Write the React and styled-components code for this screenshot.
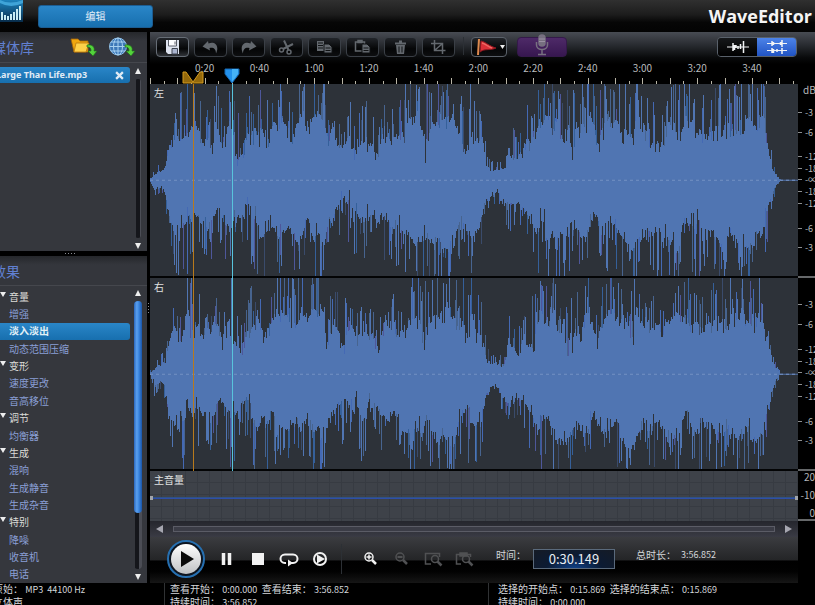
import React from "react";
import styled, { createGlobalStyle, css } from "styled-components";

const GlobalStyle = createGlobalStyle`
  * { box-sizing: border-box; }
  body {
    margin: 0;
    background: #000;
    color: #d4d6da;
    font: 10px/12px "Noto Sans CJK SC", "Noto Sans", sans-serif;
    overflow: hidden;
  }
  button, input { font: inherit; color: inherit; }
  button { margin: 0; padding: 0; border: 0; background: none; cursor: pointer; }
  svg { display: block; }
`;

/* ---------- data ---------- */

const DURATION = 236.852;
const SELECTION = 15.869;
const CURSOR = 30.149;
const percent = (s) => (s / DURATION) * 100;

const EFFECTS = [
  { name: "音量", items: ["增强", "淡入淡出", "动态范围压缩"] },
  { name: "变形", items: ["速度更改", "音高移位"] },
  { name: "调节", items: ["均衡器"] },
  { name: "生成", items: ["混响", "生成静音", "生成杂音"] },
  { name: "特别", items: ["降噪", "收音机", "电话"] },
];

const DB_MARKS = [
  ["-3", 22], ["-6", 20], ["-12", 25], ["-18", 12], ["-∞", 11],
  ["-18", 12], ["-12", 12], ["-6", 25], ["-3", 19],
];

/* Envelope points: position, quiet level, loud level */
const UPPER = [
  [0, 1, 3], [8, 4, 14], [15, 9, 24], [19, 32, 40], [23, 38, 75], [30, 23, 80], [38, 38, 97], [46, 38, 84], [54, 32, 70],
  [60, 28, 60], [66, 38, 97], [72, 20, 60], [80, 34, 97], [86, 20, 66], [93, 18, 50], [100, 34, 85], [108, 34, 88],
  [115, 30, 70], [122, 35, 80], [128, 48, 97], [138, 44, 90], [141, 24, 90], [148, 46, 97], [165, 48, 97], [174, 42, 97],
  [178, 20, 70], [184, 34, 90], [192, 22, 60], [198, 34, 78], [206, 22, 55], [214, 34, 80], [222, 24, 60], [228, 14, 45],
  [234, 42, 80], [248, 34, 70], [256, 40, 90], [266, 50, 97], [274, 22, 97], [282, 50, 97], [306, 50, 97], [313, 22, 97],
  [318, 26, 95], [324, 36, 92], [332, 26, 62], [335, 14, 36], [340, 9, 18], [348, 7, 17], [355, 10, 18], [358, 24, 55],
  [367, 11, 40], [376, 28, 68], [384, 20, 72], [391, 48, 97], [404, 42, 90], [415, 26, 85], [428, 28, 97], [440, 42, 97],
  [447, 26, 80], [458, 46, 94], [470, 38, 94], [480, 30, 90], [488, 48, 97], [500, 32, 70], [512, 32, 76], [522, 38, 90],
  [534, 46, 92], [548, 40, 84], [558, 38, 76], [572, 32, 97], [585, 40, 90], [597, 42, 97], [607, 46, 97], [613, 44, 97],
  [616, 28, 72], [620, 18, 32], [623, 7, 18], [627, 3, 8], [630, 0, 1], [648, 0, 0],
];
const LOWER = [
  [0, 1, 3], [4, 5, 22], [9, 6, 14], [15, 10, 26], [19, 34, 52], [27, 42, 97], [34, 36, 97], [44, 28, 66], [52, 32, 74],
  [60, 26, 76], [69, 16, 60], [76, 28, 76], [82, 32, 97], [90, 26, 60], [96, 20, 58], [104, 30, 97], [112, 36, 97],
  [120, 34, 80], [128, 44, 88], [140, 40, 82], [150, 50, 84], [156, 34, 68], [164, 50, 97], [174, 52, 97], [178, 34, 60],
  [188, 20, 60], [196, 14, 70], [206, 22, 70], [214, 30, 90], [224, 24, 58], [232, 34, 72], [245, 38, 80], [256, 44, 90],
  [266, 55, 97], [276, 38, 90], [284, 54, 97], [305, 56, 97], [312, 24, 66], [318, 38, 80], [326, 38, 92], [331, 34, 72],
  [336, 14, 28], [342, 11, 22], [350, 12, 34], [356, 18, 48], [364, 20, 46], [370, 22, 44], [378, 26, 66], [386, 36, 88],
  [396, 38, 97], [408, 50, 97], [416, 50, 97], [424, 44, 82], [436, 50, 90], [444, 26, 70], [452, 40, 90], [462, 40, 76],
  [474, 56, 97], [484, 60, 97], [496, 42, 80], [508, 40, 92], [518, 56, 97], [528, 56, 97], [536, 30, 70], [542, 38, 90],
  [552, 32, 97], [564, 50, 97], [578, 50, 86], [590, 50, 96], [604, 48, 97], [612, 46, 90], [617, 26, 60], [621, 12, 30],
  [626, 4, 10], [630, 0, 1], [648, 0, 0],
];

function randomSource(seed) {
  let s = seed;
  return () => {
    s = (s * 1664525 + 1013904223) >>> 0;
    return s / 4294967296;
  };
}

function levelsAt(points, x) {
  let i = 0;
  while (i < points.length - 2 && points[i + 1][0] <= x) i += 1;
  const [ax, al, ah] = points[i];
  const [bx, bl, bh] = points[i + 1];
  const t = (x - ax) / (bx - ax);
  return [al + (bl - al) * t, ah + (bh - ah) * t];
}

const SHADES = ["#5075b2", "#47648f", "#4469b4", "#35609a", "#4e579b", "#3a4b6b"];

function buildWave(seed) {
  const next = randomSource(seed);
  const paths = SHADES.map(() => "");
  [[UPPER, -1], [LOWER, 1]].forEach(([points, dir]) => {
    let swell = 0.2;
    for (let x = 0; x < 632; x += 1) {
      const [low, high] = levelsAt(points, x);
      if (x % 5 === 0) swell = next() * 0.36;
      const jitter = next() < 0.12 ? -0.15 : next() * 0.16;
      const base = Math.min(high, low + (high - low) * (swell + jitter));
      paths[0] += `M${x} 97h1v${dir * Math.round(base)}h-1z`;
      if (next() < 0.44) {
        const top = Math.min(97, base + (high * 1.12 - base) * Math.pow(next(), 0.85));
        const tone = Math.floor(next() * next() * SHADES.length * 1.3);
        paths[Math.min(tone, SHADES.length - 1)] +=
          `M${x} ${97 + dir * Math.round(base)}h1v${dir * Math.max(0, Math.round(top - base))}h-1z`;
      }
    }
  });
  return paths;
}

const WAVES = [buildWave(4211), buildWave(90817)];

/* ---------- shell ---------- */

const Shell = styled.div`
  display: grid;
  grid-template-rows: 32px minmax(0, 1fr) 22px;
  height: 100vh;
  margin-left: -8px;
  overflow: hidden;
`;
const Header = styled.header`
  display: flex;
  align-items: center;
  gap: 14px;
  padding: 0 3px 0 8px;
  background: linear-gradient(#303030, #1d1d1d 45%, #060606 70%, #030303);
  h1 {
    margin: 0 0 0 auto;
    color: #f4f4f4;
    font: 700 18px/24px "Open Sans", "Noto Sans", sans-serif;
  }
`;
const Logo = styled.svg`
  width: 24px;
  height: 24px;
  align-self: flex-start;
`;
const blueFill = css`
  background: linear-gradient(#2a86c8, #176fae);
`;
const ModeTab = styled.button`
  ${blueFill}
  width: 115px;
  height: 23px;
  border: 1px solid #1c5d92;
  border-radius: 3px;
  color: #e4eef8;
`;
const Body = styled.div`
  display: grid;
  grid-template-columns: 155px 3px minmax(0, 1fr);
  min-height: 0;
`;

/* ---------- sidebar ---------- */

const Sidebar = styled.aside`
  display: grid;
  grid-template-rows: 219px 5px minmax(0, 1fr);
  background: #35373d;
  min-height: 0;
`;
const Panel = styled.section`
  display: flex;
  flex-direction: column;
  min-height: 0;
`;
const PanelHead = styled.div`
  display: flex;
  align-items: center;
  gap: 10px;
  height: ${(p) => p.$h}px;
  padding-right: 11px;
  background: linear-gradient(#25272b, #34363c 30%);
  border-bottom: 1px solid #45474d;
  h2 {
    margin: 0 auto 0 0;
    color: #6180d2;
    font-size: 14px;
    font-weight: 400;
    line-height: 20px;
  }
  button svg { width: 28px; height: 20px; }
`;
const PanelBody = styled.div`
  display: grid;
  grid-template-columns: minmax(0, 1fr) 15px;
  gap: 2px;
  flex: 1;
  min-height: 0;
  padding-top: ${(p) => p.$top}px;
`;
const FileRow = styled.div`
  ${blueFill}
  display: flex;
  align-items: center;
  justify-content: space-between;
  height: 16px;
  padding: 0 6px 0 4px;
  border-radius: 0 3px 3px 0;
  color: #e0ebf5;
  font: 700 9px/16px "Noto Sans", sans-serif;
  white-space: nowrap;
  svg { width: 9px; height: 9px; }
`;
const EffectList = styled.div`
  display: flex;
  flex-direction: column;
  min-height: 0;
`;
const EffectRow = styled.button`
  display: flex;
  flex: 1;
  align-items: center;
  gap: 3px;
  min-height: 12px;
  padding-left: ${(p) => (p.$group ? 8 : 17)}px;
  border-radius: 0 3px 3px 0;
  color: ${(p) => (p.$group ? "#dcdcd8" : "#8a9fd6")};
  text-align: left;
  ${(p) => p.$active && css`${blueFill} color: #e2f0f6; font-weight: 700;`}
  svg { width: 6px; height: 5px; margin-bottom: 5px; }
`;
const ScrollColumn = styled.div`
  display: flex;
  flex-direction: column;
  align-items: center;
  gap: 5px;
  padding: ${(p) => p.$pad};
  button svg { width: 6px; height: 6px; }
`;
const Track = styled.div`
  flex: 1;
  width: ${(p) => (p.$wide ? 8 : 6)}px;
  display: flex;
  justify-content: center;
  background: linear-gradient(90deg, transparent 1px, #15161b 1px 5px, #4b4d55 5px);
  border-radius: 4px;
`;
const Thumb = styled.div`
  width: 8px;
  height: 79%;
  border-radius: 4px;
  background: linear-gradient(90deg, #2b67bd, #5ba0ee 35%, #3b86e0 60%, #1a55a9);
`;
const Grip = styled.div`
  display: flex;
  flex-direction: ${(p) => (p.$vertical ? "column" : "row")};
  align-items: center;
  justify-content: center;
  gap: 2px;
  background: #000;
  i { width: 1px; height: 1px; background: #8a8c92; }
`;

/* ---------- editor ---------- */

const Editor = styled.main`
  display: grid;
  grid-template-columns: minmax(0, 1fr) 17px;
  grid-template-rows: 32px 20px minmax(0, 1fr) minmax(0, 1fr) 50px 16px 46px;
  min-height: 0;
  min-width: 0;
`;
const Toolbar = styled.div`
  grid-column: 1 / -1;
  display: flex;
  align-items: flex-start;
  gap: 5px;
  padding: 5px 18px 0 6px;
  background: linear-gradient(#484c53, #292c31 40%, #090a0b 80%, #000);
`;
const ToolButton = styled.button`
  display: grid;
  place-items: center;
  width: 33px;
  height: 20px;
  border: 1px solid ${(p) => (p.$lit ? "#666d76" : "#3a3f46")};
  border-radius: 4px;
  background: linear-gradient(#22252a, #050607 60%, ${(p) => (p.$lit ? "#303338" : "#0d0e10")});
  color: ${(p) => (p.$lit ? "#dde2ee" : "#63686e")};
  svg { width: 17px; height: 16px; }
`;
const Divider = styled.span`
  width: 1px;
  height: ${(p) => p.$h}px;
  margin: 0 ${(p) => p.$gap}px;
  background: #2c3035;
`;
const FlagButton = styled(ToolButton)`
  width: 36px;
  margin-left: -1px;
  grid-template-columns: 26px 8px;
  border-color: #5b626b;
  svg:first-child { width: 24px; height: 18px; }
  svg:last-child { width: 5px; height: 4px; }
`;
const MicButton = styled(ToolButton)`
  width: 50px;
  margin-left: 5px;
  border-color: #34194a;
  background: linear-gradient(#4e2a68, #371750);
  color: #777080;
  svg { width: 16px; height: 22px; margin-top: -4px; }
`;
const ViewSwitch = styled.div`
  display: grid;
  grid-template-columns: 1fr 1fr;
  width: 80px;
  height: 20px;
  margin-left: auto;
  overflow: hidden;
  border: 1px solid #59616b;
  border-radius: 4px;
`;
const ViewButton = styled.button`
  display: grid;
  place-items: center;
  background: ${(p) => (p.$active ? "linear-gradient(#4d83e8, #2154c4)" : "linear-gradient(#16181a, #000)")};
  color: #f2f4f6;
  svg { width: 24px; height: 16px; }
`;
const Ruler = styled.div`
  position: relative;
  background: #000;
`;
const Mark = styled.span`
  position: absolute;
  left: ${(p) => p.$at}%;
  bottom: 0;
  width: 1px;
  height: ${(p) => (p.$major ? 6 : 3)}px;
  background: #b9b5a6;
`;
const MarkLabel = styled.span`
  position: absolute;
  left: ${(p) => p.$at}%;
  bottom: 10px;
  transform: translateX(-50%);
  color: #b9bbbd;
`;
const Pin = styled.svg`
  position: absolute;
  z-index: 2;
  left: ${(p) => p.$at}%;
  bottom: 0;
  width: ${(p) => p.$w}px;
  height: ${(p) => p.$h}px;
  transform: translateX(-50%);
`;
const Channel = styled.section`
  position: relative;
  grid-column: 1;
  min-height: 0;
  background: #2d3239;
  border-bottom: 2px solid #030405;
`;
const WaveDrawing = styled.svg`
  width: 100%;
  height: 100%;
`;
const ChannelLabel = styled.span`
  position: absolute;
  left: 4px;
  top: 3px;
  color: #e0e2e2;
`;
const TimeLine = styled.i`
  position: absolute;
  top: 0;
  bottom: -2px;
  left: ${(p) => p.$at}%;
  width: 1px;
  background: ${(p) => p.$color};
`;
const Scale = styled.div`
  grid-column: 2;
  display: flex;
  flex-direction: column;
  overflow: hidden;
  border-bottom: 2px solid #66686a;
  min-height: 0;
`;
const ScaleMark = styled.div`
  flex: ${(p) => p.$grow} 1 0;
  display: flex;
  align-items: flex-end;
  gap: 3px;
  min-height: 0;
  color: #b4b6b8;
  white-space: nowrap;
  font-size: 9px;
  line-height: 10px;
  &::before {
    content: "";
    flex: none;
    width: 4px;
    height: 1px;
    margin-bottom: 5px;
    background: #8b8d8f;
  }
`;
const ScaleUnit = styled.div`
  flex: 11 1 0;
  padding-left: 5px;
  color: #b4b6b8;
  line-height: 12px;
`;
const ScaleEnd = styled.div`
  flex: 23 1 0;
`;
const Volume = styled.section`
  position: relative;
  padding: 3px 4px;
  color: #e0e2e2;
  background:
    repeating-linear-gradient(90deg, transparent 0 11px, #373b42 11px 12px),
    repeating-linear-gradient(transparent 0 11px, #373b42 11px 12px),
    #3e4249;
`;
const VolumeLine = styled.div`
  position: absolute;
  left: 0;
  right: 0;
  top: 25px;
  display: flex;
  align-items: center;
  justify-content: space-between;
  height: 4px;
  background: linear-gradient(transparent 1px, #2f5284 1px 2px, #2f4ea8 2px 3px, transparent 3px);
  i { width: 3px; height: 4px; background: #a2a5aa; }
`;
const VolumeScale = styled.div`
  display: flex;
  flex-direction: column;
  justify-content: space-between;
  align-items: flex-end;
  overflow: hidden;
  border-bottom: 2px solid #66686a;
  color: #b4b6b8;
  white-space: nowrap;
`;
const HScroll = styled.div`
  grid-column: 1;
  display: flex;
  align-items: center;
  gap: 10px;
  padding: 0 6px;
  background: linear-gradient(#25262d, #3a3b44);
  button svg { width: 7px; height: 8px; fill: #a6a6b0; }
`;
const HTrack = styled.div`
  flex: 1;
  height: 6px;
  border: 1px solid #5b5c66;
  background: #3b3c46;
`;
const Transport = styled.div`
  grid-column: 1;
  display: flex;
  align-items: center;
  padding: 0 0 2px 16px;
  background: linear-gradient(#3b3c40, #242527 50%, #000 52%, #020202 75%, #161616);
`;
const PlayButton = styled.button`
  width: 40px;
  height: 40px;
  svg { width: 40px; height: 40px; }
`;
const TransportButton = styled.button`
  display: grid;
  place-items: center;
  width: 31px;
  height: 24px;
  color: ${(p) => (p.$off ? "#505153" : "#f2f2f2")};
  svg { width: 20px; height: 18px; }
`;
const ButtonGroup = styled.div`
  display: flex;
  margin-left: ${(p) => p.$gap}px;
`;
const TimeField = styled.label`
  display: flex;
  align-items: center;
  gap: 7px;
  margin-left: 17px;
  span { margin-bottom: 8px; }
  input {
    width: 82px;
    height: 20px;
    padding: 0 0 2px;
    border: 1px solid #5a6a7c;
    background: radial-gradient(ellipse at 50% 110%, #0e4490, #0c1b33 50%, #151b25);
    color: #e8edf2;
    font-size: 13px;
    line-height: 16px;
    text-align: center;
    outline: 0;
  }
`;
const Total = styled.div`
  display: flex;
  gap: 5px;
  margin: 0 0 8px 21px;
  white-space: nowrap;
`;
const Num = styled.span`
  font-size: 9px;
`;

/* ---------- status bar ---------- */

const StatusBar = styled.footer`
  display: grid;
  grid-template-columns: 172px 324px minmax(0, 1fr);
  overflow: hidden;
  background: #000;
`;
const StatusCell = styled.div`
  padding-left: ${(p) => p.$pad}px;
  border-left: ${(p) => (p.$first ? 0 : 1)}px solid #303234;
  white-space: pre;
`;

/* ---------- icons ---------- */

const Tri = ({ d }) => (
  <svg viewBox="0 0 10 10" preserveAspectRatio="none" fill="#eee" aria-hidden="true">
    <path d={{ up: "M5 0 10 10H0z", down: "M0 0H10L5 10z", left: "M0 5 10 0V10z", right: "M0 0 10 5 0 10z" }[d]} />
  </svg>
);

const Icon = ({ box = "0 0 17 16", children }) => (
  <svg viewBox={box} fill="none" stroke="currentColor" strokeWidth="1.5" aria-hidden="true">{children}</svg>
);

const SaveIcon = () => (
  <Icon>
    <path d="M2 1h13v14H4l-2-2z" fill="currentColor" stroke="none" />
    <path d="M4 1h9v6H4z" fill="#fbfcff" stroke="none" />
    <path d="M4.500 1v6h8V1M11 2.500v3" stroke="#5c616c" strokeWidth="1" />
    <path d="M8 9.500h5.500V15H8z" fill="#aab4cf" stroke="#3e4450" strokeWidth="1" />
  </Icon>
);
const UndoIcon = ({ flip }) => (
  <Icon>
    <g transform={flip ? "translate(17 0) scale(-1 1)" : undefined}>
      <path d="M0.500 7.500 6 2l.5 2.500C12 2 18 6 14 14.500c0-5-3-6.500-6.500-5.500L8 11.500z" fill="currentColor" stroke="none" />
    </g>
  </Icon>
);
const CutIcon = () => (
  <Icon>
    <path d="M6 1.500 10.500 11M15 5 5 10" strokeWidth="2" />
    <circle cx="3.500" cy="11" r="2" />
    <circle cx="11" cy="13" r="2" />
  </Icon>
);
const CopyIcon = () => (
  <Icon>
    <path d="M1 2h7v10H1z" fill="currentColor" stroke="none" />
    <path d="M2 4h5M2 6.500h5M2 9h5" stroke="#101214" strokeWidth="1" />
    <path d="M8 5h5l3 3v6H8z" fill="currentColor" stroke="#101214" strokeWidth="1" />
    <path d="M9.500 9h5M9.500 11.500h5" stroke="#101214" strokeWidth="1" />
  </Icon>
);
const PasteIcon = () => (
  <Icon>
    <path d="M1.500 3h9v9h-9z" /><path d="M4 1.500h4v2H4z" fill="currentColor" />
    <path d="M8 5h5l3 3v6H8z" fill="currentColor" stroke="#101214" strokeWidth="1" />
    <path d="M9.500 9h5M9.500 11.500h5" stroke="#101214" strokeWidth="1" />
  </Icon>
);
const TrashIcon = () => (
  <Icon><path d="M3 4.500h11M7 2.500h3" strokeWidth="2" /><path d="M4 6h9l-1 9H5z" fill="currentColor" stroke="none" /><path d="M7 7.500v6M10 7.500v6" stroke="#101214" strokeWidth="1" /></Icon>
);
const CropIcon = () => (
  <Icon><path d="M4.500 1v10.500H15.500M1 4.500h11.500V15M5 11l7-6" /></Icon>
);
const FlagIcon = () => (
  <Icon box="0 0 24 18">
    <path d="M6 1 5 17" stroke="#dd8a4f" strokeWidth="2" />
    <path d="M8 3c5 1 8 5 15 7-6 3-11 0-16 4z" fill="#dc3038" stroke="#8e1820" strokeWidth="1" />
    <path d="M9 5c4 1 6 4 10 5" stroke="#ee6964" />
  </Icon>
);
const MicIcon = () => (
  <Icon box="0 0 16 22">
    <rect x="5" y="1" width="6" height="11" rx="3" fill="currentColor" />
    <path d="M2.500 8v3c0 6 11 6 11 0V8M8 16v4M4 20.500h8" />
    <path d="M5 5h6M5 7.500h6" stroke="#9b91a4" strokeWidth="1" />
  </Icon>
);
const WaveIcon = ({ double }) => (
  <Icon box="0 0 24 16">
    {double ? (
      <>
        <path d="M2 4.500h20M2 11.500h20" strokeWidth="1" />
        <path d="M7 2v5M8.500 3v3M15.500 3v3M17 1v7M7 9v5M8.500 10v4M12 10v3M17 9v6" />
      </>
    ) : (
      <>
        <path d="M1 8h22" strokeWidth="1" />
        <path d="M7 4v8M8.500 6v5M10 6v3M12 7v3M14.500 5v5M17.500 2v12" />
      </>
    )}
  </Icon>
);
const GreenArrow = () => (
  <path d="M17 8c6-1 8 3 7 6h3l-4 5-5-5h3c0-3-1-4-4-4z" fill="#53d33b" stroke="#246c20" strokeWidth="0.700" />
);
const FolderIcon = () => (
  <Icon box="0 0 28 20">
    <path d="M1 2h7l2 2h8v11H4z" fill="#f0a70f" stroke="#a66508" strokeWidth="0.800" />
    <path d="M6 6h13l-3 9H4z" fill="#ffd149" stroke="#b8770c" strokeWidth="0.800" />
    <GreenArrow />
  </Icon>
);
const GlobeIcon = () => (
  <Icon box="0 0 28 20">
    <circle cx="10" cy="9.500" r="8.500" fill="#3c78b8" stroke="#8fc0e8" strokeWidth="1" />
    <path d="M1.500 9.500h17M10 1v17M3 5h14M3 14h14" stroke="#a7d0ef" strokeWidth="1" />
    <ellipse cx="10" cy="9.500" rx="4.500" ry="8.500" stroke="#a7d0ef" strokeWidth="1" />
    <GreenArrow />
  </Icon>
);
const PlayIcon = () => (
  <svg viewBox="0 0 40 40" aria-hidden="true">
    <defs>
      <linearGradient id="face" x2="0" y2="1"><stop stopColor="#fff" /><stop offset="1" stopColor="#bfc1c4" /></linearGradient>
    </defs>
    <circle cx="20" cy="20" r="18" fill="#0d1520" stroke="#266fb0" strokeWidth="2" />
    <circle cx="20" cy="20" r="15" fill="url(#face)" />
    <path d="M15 12 28 20 15 28z" fill="#0a0a0a" />
  </svg>
);
const Lens = ({ x = 8, y = 7, r = 4 }) => (
  <><circle cx={x} cy={y} r={r} /><path d={`M${x + r - 1} ${y + r - 1}l4 4`} strokeWidth="2.500" /></>
);
const box20 = "0 0 20 18";

const TOOLS = [
  ["保存", <SaveIcon />, true], ["撤销", <UndoIcon />], ["重做", <UndoIcon flip />], ["剪切", <CutIcon />],
  ["复制", <CopyIcon />], ["粘贴", <PasteIcon />], ["删除", <TrashIcon />], ["裁剪", <CropIcon />],
];

/* ---------- parts ---------- */

function MediaPanel() {
  return (
    <Panel>
      <PanelHead $h={31}>
        <h2>媒体库</h2>
        <button aria-label="打开文件"><FolderIcon /></button>
        <button aria-label="在线获取"><GlobeIcon /></button>
      </PanelHead>
      <PanelBody $top={4}>
        <FileRow>
          Large Than Life.mp3
          <button aria-label="关闭文件">
            <Icon box="0 0 8 8"><path d="M1 1l6 6M7 1 1 7" strokeWidth="2" /></Icon>
          </button>
        </FileRow>
        <ScrollColumn $pad="1px 3px 2px 0">
          <button aria-label="向上滚动"><Tri d="up" /></button>
          <Track />
          <button aria-label="向下滚动"><Tri d="down" /></button>
        </ScrollColumn>
      </PanelBody>
    </Panel>
  );
}

function EffectsPanel() {
  return (
    <Panel>
      <PanelHead $h={30}><h2>效果</h2></PanelHead>
      <PanelBody $top={2}>
        <EffectList>
          {EFFECTS.map((group) => (
            <React.Fragment key={group.name}>
              <EffectRow $group aria-expanded="true"><Tri d="down" />{group.name}</EffectRow>
              {group.items.map((item) => (
                <EffectRow key={item} $active={item === "淡入淡出"}>{item}</EffectRow>
              ))}
            </React.Fragment>
          ))}
        </EffectList>
        <ScrollColumn $pad="2px 3px 3px 0">
          <button aria-label="向上滚动"><Tri d="up" /></button>
          <Track $wide><Thumb /></Track>
          <button aria-label="向下滚动"><Tri d="down" /></button>
        </ScrollColumn>
      </PanelBody>
    </Panel>
  );
}

function TimeRuler() {
  const ticks = Array.from({ length: 48 }, (_, i) => i * 5);
  const labels = Array.from({ length: 11 }, (_, i) => (i + 1) * 20);
  return (
    <Ruler>
      {ticks.map((t) => <Mark key={t} $at={percent(t)} $major={t % 10 === 0} />)}
      {labels.map((t) => (
        <MarkLabel key={t} $at={percent(t)}>
          {Math.floor(t / 60)}:{String(t % 60).padStart(2, "0")}
        </MarkLabel>
      ))}
      <Pin $at={percent(SELECTION)} $w={22} $h={13} viewBox="0 0 22 13" aria-hidden="true">
        <path d="M1 1v11h20V1h-3l-7 10L4 1z" fill="#94690c" stroke="#d39a1e" />
      </Pin>
      <Pin $at={percent(CURSOR)} $w={16} $h={16} viewBox="0 0 16 16" aria-hidden="true">
        <path d="M1 1h14v5L8 15 1 6z" fill="#2391ec" stroke="#1768b2" />
        <path d="M8 1h6v5l-6 8z" fill="#45b2f7" />
      </Pin>
    </Ruler>
  );
}

function ChannelView({ name, wave }) {
  return (
    <Channel>
      <WaveDrawing viewBox="0 0 648 194" preserveAspectRatio="none" shapeRendering="crispEdges" aria-hidden="true">
        {wave.map((d, i) => <path key={SHADES[i]} d={d} fill={SHADES[i]} />)}
        <path d="M0 97.500H648" stroke="#5074ae" />
        <path d="M0 97.500H648" stroke="#7593c6" strokeDasharray="3 3" />
      </WaveDrawing>
      <TimeLine $at={percent(SELECTION)} $color="#b87a1c" />
      <TimeLine $at={percent(CURSOR)} $color="#58c4dc" />
      <ChannelLabel>{name}</ChannelLabel>
    </Channel>
  );
}

function DecibelScale({ unit }) {
  return (
    <Scale>
      <ScaleUnit>{unit ? "dB" : ""}</ScaleUnit>
      {DB_MARKS.map(([label, gap], i) => (
        <ScaleMark key={i} $grow={gap}>{label}</ScaleMark>
      ))}
      <ScaleEnd />
    </Scale>
  );
}

function TransportBar() {
  return (
    <Transport>
      <PlayButton aria-label="播放"><PlayIcon /></PlayButton>
      <ButtonGroup $gap={5}>
        <TransportButton aria-label="暂停"><Icon box={box20}><path d="M6.500 3v12M12.500 3v12" strokeWidth="3.500" /></Icon></TransportButton>
        <TransportButton aria-label="停止"><Icon box={box20}><path d="M4 3h12v12H4z" fill="currentColor" stroke="none" /></Icon></TransportButton>
        <TransportButton aria-label="循环">
          <Icon box={box20}><path d="M7 13H6C0 13 0 4.500 6 4.500h8c6 0 6 8.500 0 8.500h-2" strokeWidth="2" /><path d="M9 9.500v7l5-3.500z" fill="currentColor" stroke="none" /></Icon>
        </TransportButton>
        <TransportButton aria-label="播放选区">
          <Icon box={box20}><circle cx="10" cy="9" r="6" strokeWidth="2" /><path d="M7 4.500 15 9 7 13.500z" fill="currentColor" stroke="none" /></Icon>
        </TransportButton>
      </ButtonGroup>
      <Divider $h={30} $gap={6} />
      <ButtonGroup $gap={7}>
        <TransportButton aria-label="放大"><Icon box={box20}><Lens /><path d="M5.500 7h5M8 4.500v5" /></Icon></TransportButton>
        <TransportButton aria-label="缩小" $off><Icon box={box20}><Lens /><path d="M5.500 7h5" strokeWidth="2" /></Icon></TransportButton>
        <TransportButton aria-label="缩放到选区" $off><Icon box={box20}><path d="M8 14H2.500V3.500h14V7" /><Lens x={12} y={9} r={3.5} /></Icon></TransportButton>
        <TransportButton aria-label="显示全部" $off><Icon box={box20}><path d="M7 14H2.500V4.500h14V7M6 3h7v3H6z" /><Lens x={12} y={9} r={3.5} /></Icon></TransportButton>
      </ButtonGroup>
      <TimeField><span>时间：</span><input type="text" defaultValue="0:30.149" /></TimeField>
      <Total><span>总时长：</span><Num>3:56.852</Num></Total>
    </Transport>
  );
}

export default function App() {
  return (
    <>
      <GlobalStyle />
      <Shell>
        <Header>
          <Logo viewBox="0 0 24 24" aria-hidden="true">
            <defs><linearGradient id="sky" x2="0" y2="1"><stop stopColor="#1d83bd" /><stop offset="1" stopColor="#082c4a" /></linearGradient></defs>
            <path d="M0 0h23v22H0z" fill="url(#sky)" />
            <path d="M0 0q10 5 23 0v3q-12 6-23 0z" fill="#3fa4d8" />
            <path d="M2 20v-8M5 20v-5M8 20v-4M11 20v-6M14 20v-8M17 20V9M20 20V6" stroke="#c8edf4" strokeWidth="2" />
          </Logo>
          <ModeTab>编辑</ModeTab>
          <h1>WaveEditor</h1>
        </Header>
        <Body>
          <Sidebar>
            <MediaPanel />
            <Grip><i /><i /><i /><i /></Grip>
            <EffectsPanel />
          </Sidebar>
          <Grip $vertical><i /><i /><i /><i /></Grip>
          <Editor>
            <Toolbar>
              {TOOLS.map(([label, icon, lit]) => (
                <ToolButton key={label} aria-label={label} $lit={lit}>{icon}</ToolButton>
              ))}
              <Divider $h={18} $gap={3} />
              <FlagButton aria-label="标记"><FlagIcon /><Tri d="down" /></FlagButton>
              <MicButton aria-label="录音"><MicIcon /></MicButton>
              <ViewSwitch>
                <ViewButton aria-label="单声道视图"><WaveIcon /></ViewButton>
                <ViewButton aria-label="双声道视图" $active><WaveIcon double /></ViewButton>
              </ViewSwitch>
            </Toolbar>
            <TimeRuler />
            <span />
            <ChannelView name="左" wave={WAVES[0]} />
            <DecibelScale unit />
            <ChannelView name="右" wave={WAVES[1]} />
            <DecibelScale />
            <Volume>
              主音量
              <VolumeLine><i /><i /></VolumeLine>
            </Volume>
            <VolumeScale><span>20</span><span>-10</span><span>0</span></VolumeScale>
            <HScroll>
              <button aria-label="向左滚动"><Tri d="left" /></button>
              <HTrack />
              <button aria-label="向右滚动"><Tri d="right" /></button>
            </HScroll>
            <TransportBar />
          </Editor>
        </Body>
        <StatusBar>
          <StatusCell $first $pad={1}>原始： <Num>MP3  44100 Hz</Num>{"\n"}立体声</StatusCell>
          <StatusCell $pad={5}>查看开始： <Num>0:00.000</Num>  查看结束： <Num>3:56.852</Num>{"\n"}持续时间： <Num>3:56.852</Num></StatusCell>
          <StatusCell $pad={9}>选择的开始点： <Num>0:15.869</Num>  选择的结束点： <Num>0:15.869</Num>{"\n"}持续时间： <Num>0:00.000</Num></StatusCell>
        </StatusBar>
      </Shell>
    </>
  );
}
